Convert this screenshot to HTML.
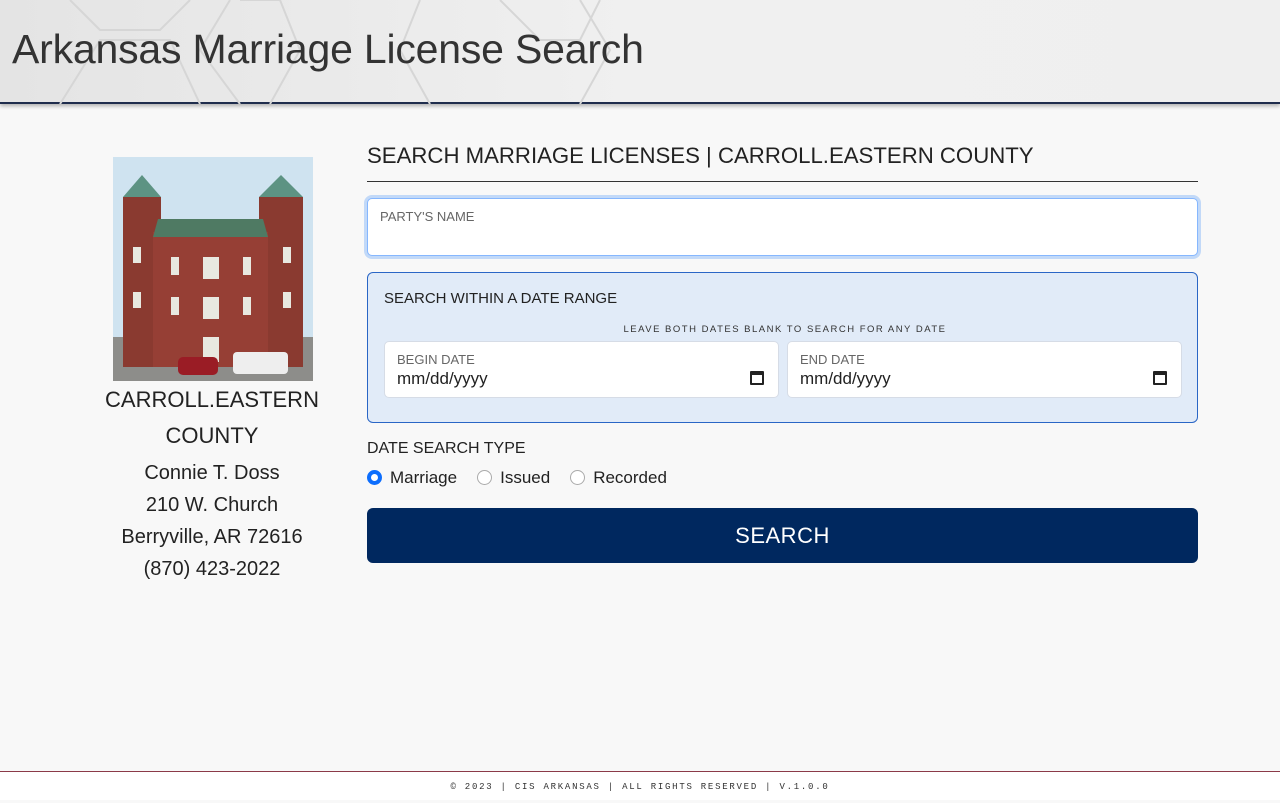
<!DOCTYPE html>
<html><head><meta charset="utf-8"><style>
*{box-sizing:border-box;margin:0;padding:0}
body{width:1280px;height:800px;background:#f8f8f8;font-family:"Liberation Sans",sans-serif;color:#222;position:relative;overflow:hidden}
.hdr{position:absolute;left:0;top:0;width:1280px;height:104px;background:linear-gradient(90deg,#e4e4e4,#f0f0f0 50%,#efefef);border-bottom:2px solid #1f2d4d;box-shadow:0 2px 4px rgba(0,0,0,.3)}
.hdr h1{position:absolute;left:12px;top:26px;font-weight:normal;font-size:41px;color:#333;letter-spacing:-0.2px}
.side{position:absolute;left:92px;width:240px;text-align:center;color:#222}
.h2{position:absolute;left:367px;top:143px;font-size:22.2px;color:#222;letter-spacing:0}
.rule{position:absolute;left:367px;top:181px;width:831px;height:1px;background:#333}
.name{position:absolute;left:367px;top:198px;width:831px;height:58px;background:#fff;border:1px solid #86b7fe;border-radius:5px;box-shadow:0 0 0 3px #c2d9f8}
.lbl{font-size:13px;color:#666;position:absolute;left:12px;top:10px}
.range{position:absolute;left:367px;top:272px;width:831px;height:151px;background:#e1ebf8;border:1px solid #2a66c6;border-radius:6px}
.date{position:absolute;top:68px;width:395px;height:57px;background:#fff;border:1px solid #d6dce6;border-radius:5px}
.date .v{position:absolute;left:12px;top:27px;font-size:17px;color:#222}
.cal{position:absolute;right:14px;top:29px;width:14px;height:14px;border:2px solid #222;border-top-width:4px;border-radius:1px}
.radio{display:inline-block;width:15px;height:15px;border-radius:50%;border:1px solid #aaa;background:#fff;vertical-align:-2px;margin-right:8px}
.btn{position:absolute;left:367px;top:508px;width:831px;height:55px;background:#00285f;border-radius:6px;color:#fff;font-size:22px;text-align:center;line-height:55px;letter-spacing:.5px}
.foot{position:absolute;left:0;top:771px;width:1280px;height:29px;border-top:1px solid #8b3a48;background:#fff;text-align:center;font-family:"Liberation Mono",monospace;font-size:9px;letter-spacing:1.75px;line-height:31px;color:#333}
</style></head><body>
<div class="hdr">
<svg width="700" height="104" style="position:absolute;left:0;top:0" fill="none" stroke="#d6d6d6" stroke-width="2">
<path d="M70 0 L100 30 L160 30 L190 0"/><path d="M60 104 L100 40 L170 40 L200 104"/><path d="M230 0 L200 50 L240 104"/><path d="M240 0 L280 0 L300 50 L270 104"/><path d="M420 0 L400 50 L430 104"/><path d="M500 0 L540 40 L580 40 L600 0"/><path d="M580 104 L610 50 L580 0"/>
</svg>
<h1>Arkansas Marriage License Search</h1>
</div>
<svg style="position:absolute;left:113px;top:157px" width="200" height="224">
<rect width="200" height="224" fill="#cfe3f0"/>
<rect x="0" y="180" width="200" height="44" fill="#8d8d8a"/>
<rect x="10" y="40" width="38" height="170" fill="#8a3a30"/>
<rect x="146" y="40" width="44" height="170" fill="#8a3a30"/>
<rect x="40" y="75" width="115" height="135" fill="#963f35"/>
<path d="M45 62 L150 62 L155 80 L40 80Z" fill="#4f7a63"/>
<path d="M10 40 L29 18 L48 40Z" fill="#5d9383"/><path d="M146 40 L168 18 L190 40Z" fill="#5d9383"/>
<g fill="#e8e8e0"><rect x="90" y="100" width="16" height="22"/><rect x="90" y="140" width="16" height="22"/><rect x="58" y="100" width="8" height="18"/><rect x="130" y="100" width="8" height="18"/><rect x="58" y="140" width="8" height="18"/><rect x="130" y="140" width="8" height="18"/><rect x="20" y="90" width="8" height="16"/><rect x="170" y="90" width="8" height="16"/><rect x="20" y="135" width="8" height="16"/><rect x="170" y="135" width="8" height="16"/><rect x="90" y="180" width="16" height="25"/></g>
<rect x="65" y="200" width="40" height="18" rx="5" fill="#9a1c25"/>
<rect x="120" y="195" width="55" height="22" rx="4" fill="#eee"/>
</svg>
<div class="side" style="top:382px;font-size:22px;line-height:36px">CARROLL.EASTERN<br>COUNTY</div>
<div class="side" style="top:457px;font-size:20px;line-height:32px">Connie T. Doss<br>210 W. Church<br>Berryville, AR 72616<br>(870) 423-2022</div>
<div class="h2">SEARCH MARRIAGE LICENSES | CARROLL.EASTERN COUNTY</div>
<div class="rule"></div>
<div class="name"><div class="lbl">PARTY'S NAME</div></div>
<div class="range">
<div style="position:absolute;left:16px;top:17px;font-size:15px;color:#222">SEARCH WITHIN A DATE RANGE</div>
<div style="position:absolute;left:0;width:831px;top:51px;text-align:center;font-size:9.5px;letter-spacing:1.5px;color:#333;padding-left:3px">LEAVE BOTH DATES BLANK TO SEARCH FOR ANY DATE</div>
<div class="date" style="left:16px"><div class="lbl">BEGIN DATE</div><div class="v">mm/dd/yyyy</div><div class="cal"></div></div>
<div class="date" style="left:419px"><div class="lbl">END DATE</div><div class="v">mm/dd/yyyy</div><div class="cal"></div></div>
</div>
<div style="position:absolute;left:367px;top:440px;font-size:16px;color:#222">DATE SEARCH TYPE</div>
<div style="position:absolute;left:367px;top:468px;font-size:17px;color:#222">
<span class="radio" style="border:4px solid #0d6efd"></span>Marriage<span style="display:inline-block;width:20px"></span><span class="radio"></span>Issued<span style="display:inline-block;width:20px"></span><span class="radio"></span>Recorded</div>
<div class="btn">SEARCH</div>
<div class="foot">© 2023 | CIS ARKANSAS | ALL RIGHTS RESERVED | V.1.0.0</div>
</body></html>
